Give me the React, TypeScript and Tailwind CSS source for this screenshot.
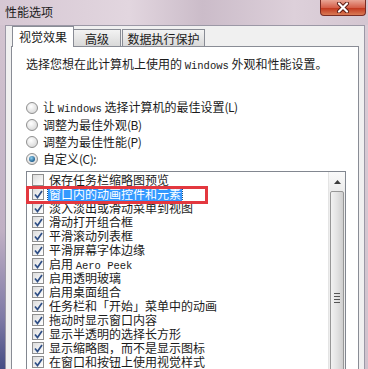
import React from "react";

const cjk = "font-['Noto_Sans_CJK_SC','Noto_Sans_CJK_JP',sans-serif]";

function Mono({ children }: { children: React.ReactNode }) {
  return <span className="font-['Liberation_Mono',monospace] text-[10.5px]">{children}</span>;
}

function Key({ k }: { k: string }) {
  return <span className="tracking-[-0.5px]">({k})</span>;
}

const radios: { label: React.ReactNode; checked?: boolean }[] = [
  { label: <>让 <Mono>Windows</Mono> 选择计算机的最佳设置<Key k="L" /></> },
  { label: <>调整为最佳外观<Key k="B" /></> },
  { label: <>调整为最佳性能<Key k="P" /></> },
  { label: <>自定义<Key k="C" />:</>, checked: true },
];

const items: { label: React.ReactNode; checked: boolean }[] = [
  { label: "保存任务栏缩略图预览", checked: false },
  { label: "窗口内的动画控件和元素", checked: true },
  { label: "淡入淡出或滑动菜单到视图", checked: true },
  { label: "滑动打开组合框", checked: true },
  { label: "平滑滚动列表框", checked: true },
  { label: "平滑屏幕字体边缘", checked: true },
  { label: <>启用 <Mono>Aero Peek</Mono></>, checked: true },
  { label: "启用透明玻璃", checked: true },
  { label: "启用桌面组合", checked: true },
  { label: "任务栏和「开始」菜单中的动画", checked: true },
  { label: "拖动时显示窗口内容", checked: true },
  { label: "显示半透明的选择长方形", checked: true },
  { label: "显示缩略图，而不是显示图标", checked: true },
  { label: "在窗口和按钮上使用视觉样式", checked: true },
];

function Radio({ checked }: { checked?: boolean }) {
  return (
    <span className="w-[12px] h-[12px] rounded-full border border-[#8f8f8f] bg-[radial-gradient(circle_at_40%_35%,#ffffff,#e2e2e2_60%,#cfcfcf)] flex items-center justify-center">
      {checked && (
        <span className="w-[6px] h-[6px] rounded-full bg-[radial-gradient(circle_at_40%_35%,#8fd0f0,#1f5f8f_70%)]" />
      )}
    </span>
  );
}

function Check({ checked }: { checked: boolean }) {
  return (
    <span className="w-[12px] h-[12px] border border-[#8f8f8f] bg-[linear-gradient(135deg,#dcdcdc,#ffffff)] flex items-center justify-center">
      {checked && (
        <svg width="9" height="9" viewBox="0 0 9 9">
          <path d="M1 4.5 L3.5 7.5 L8 1" fill="none" stroke="#2f4f86" strokeWidth="1.7" />
        </svg>
      )}
    </span>
  );
}

export default function App() {
  return (
    <div className={`w-[368px] h-[369px] overflow-hidden flex flex-col bg-[linear-gradient(90deg,#d6c7d3,#e2d6df_35%,#cbbcc9_55%,#ddd0da_80%,#d4c6d1)] ${cjk}`}>
      <div className="h-[25px] flex justify-between shrink-0">
        <span className="pl-[5px] pt-[4px] text-[12px] leading-[16px] text-[#1b1b1b]">性能选项</span>
        <div className="mr-[2px] w-[46px] h-[16px] rounded-b-[4px] border border-t-0 border-[#7a2c24] bg-[linear-gradient(180deg,#e9a595,#d5604a_50%,#c2391f_55%,#d97a55)] flex items-center justify-center">
          <svg width="14" height="11" viewBox="0 0 14 11">
            <path d="M3 1.5 L11 9.5 M11 1.5 L3 9.5" stroke="#5a1a12" strokeWidth="4" strokeLinecap="round" />
            <path d="M3 1.5 L11 9.5 M11 1.5 L3 9.5" stroke="#ffffff" strokeWidth="2.2" strokeLinecap="round" />
          </svg>
        </div>
      </div>

      <div className="flex flex-1 min-h-0">
        <div className="w-[5px] bg-[linear-gradient(180deg,#d3c4d0,#c0b0c4_60%,#7f7aa6_85%,#454c84)]" />
        <div className="w-[360px] bg-[#f0f0f0] border-t border-l border-r border-[#9c98a6] flex flex-col">
          <div className="h-[25px] flex items-end pl-[6px] text-[12px] leading-[14px] text-[#1b1b1b]">
            <div className="relative z-10 -mb-px w-[62px] h-[21px] bg-white border border-b-0 border-[#898c95] flex items-center justify-center">
              视觉效果
            </div>
            <div className="-ml-px w-[48px] h-[17px] bg-[linear-gradient(180deg,#f3f3f3,#e6e6e6_50%,#d9d9d9)] border border-b-0 border-[#898c95] flex items-center justify-center pt-[1px]">
              高级
            </div>
            <div className="ml-[1px] w-[83px] h-[17px] bg-[linear-gradient(180deg,#f3f3f3,#e6e6e6_50%,#d9d9d9)] border border-b-0 border-[#898c95] flex items-center justify-center pt-[1px]">
              数据执行保护
            </div>
          </div>

          <div className="ml-[5px] w-[348px] flex-1 bg-white border border-b-0 border-[#898c95] pl-[14px] pt-[10px] text-[12px] leading-[14px] text-[#1b1b1b]">
            <div>选择您想在此计算机上使用的 <Mono>Windows</Mono> 外观和性能设置。</div>

            <div className="mt-[26px] flex flex-col">
              {radios.map((r, i) => (
                <div key={i} className="h-[17px] flex items-center gap-[5px]">
                  <Radio checked={r.checked} />
                  <span>{r.label}</span>
                </div>
              ))}
            </div>

            <div className="relative mt-[4px] w-[320px] h-[220px] border border-[#828790] flex">
              <div className="flex-1 pt-[1px] flex flex-col">
                {items.map((it, i) => (
                  <div key={i} className="h-[14px] flex items-center shrink-0">
                    <span className="ml-[5px]">
                      <Check checked={it.checked} />
                    </span>
                    <span
                      className={`ml-[4px] px-[1px] h-[14px] leading-[14px] ${
                        i === 1 ? "bg-[#3399ff] text-white outline-1 outline-dotted outline-[#1a4d80]" : ""
                      }`}
                    >
                      {it.label}
                    </span>
                  </div>
                ))}
              </div>
              <div className="w-[17px] bg-[#eeeeee] border-l border-[#e4e4e4] flex flex-col">
                <div className="h-[19px] bg-[linear-gradient(180deg,#fafafa,#ececec)] flex items-center justify-center">
                  <svg width="7" height="4" viewBox="0 0 7 4">
                    <path d="M0 4 L3.5 0 L7 4 Z" fill="#3c3c3c" />
                  </svg>
                </div>
                <div className="mx-[1px] flex-1 rounded-[2px] border border-[#979797] bg-[linear-gradient(90deg,#f2f2f2,#e3e3e3_50%,#cfcfcf)] flex flex-col items-center pt-[101px]">
                  <div className="w-[6px] flex flex-col gap-[2px]">
                    <div className="h-px bg-[#555]" />
                    <div className="h-px bg-[#555]" />
                    <div className="h-px bg-[#555]" />
                    <div className="h-px bg-[#555]" />
                  </div>
                </div>
              </div>
              <div className="absolute left-[-1px] top-[14px] w-[182px] h-[18px] border-[3px] border-[#e3383f]" />
            </div>
          </div>
        </div>
        <div className="flex-1 bg-[linear-gradient(180deg,#d9ccd6,#cfc2cd)]" />
      </div>
    </div>
  );
}
